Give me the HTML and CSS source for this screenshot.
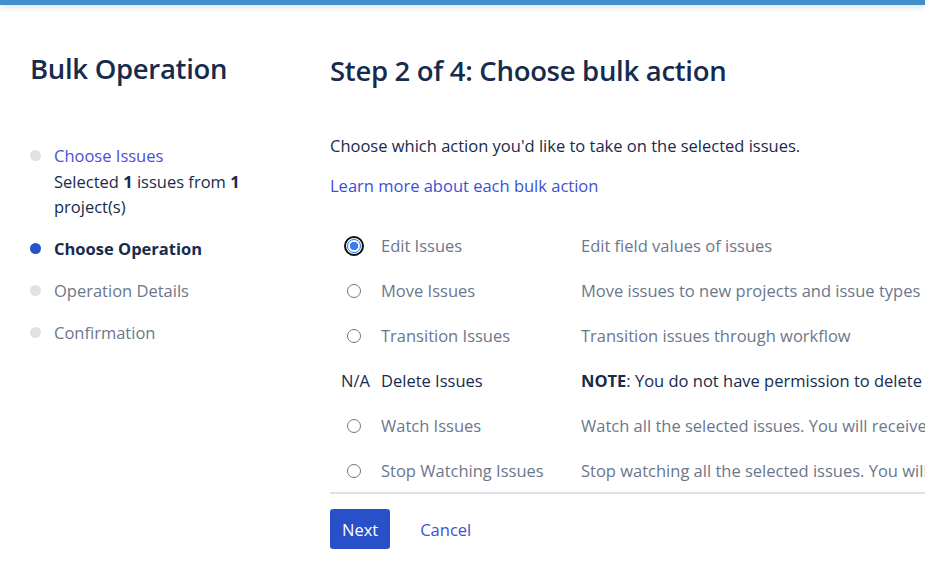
FILE: index.html
```html
<!DOCTYPE html>
<html lang="en">
<head>
  <meta charset="UTF-8" />
  <meta name="viewport" content="width=device-width, initial-scale=1.0"/>
  <title>Bulk Operation</title>
  <link rel="stylesheet" href="styles.css">
</head>
<body>
  <div class="topbar"></div>

  <div class="page">
    <div class="sidebar">
      <h1>Bulk Operation</h1>
      <ul class="steps">
        <li class="done">
          <a href="#">Choose Issues</a>
          <div class="note">Selected <strong>1</strong> issues from <strong>1</strong> project(s)</div>
        </li>
        <li class="current">Choose Operation</li>
        <li>Operation Details</li>
        <li>Confirmation</li>
      </ul>
    </div>

    <div class="main">
      <h2>Step 2 of 4: Choose bulk action</h2>
      <p class="intro">Choose which action you'd like to take on the selected issues.</p>
      <p class="more"><a href="#">Learn more about each bulk action</a></p>

      <table class="ops">
        <tr>
          <td class="pick"><input type="radio" name="op" class="focus" checked></td>
          <td class="name">Edit Issues</td>
          <td class="desc">Edit field values of issues</td>
        </tr>
        <tr>
          <td class="pick"><input type="radio" name="op"></td>
          <td class="name">Move Issues</td>
          <td class="desc">Move issues to new projects and issue types</td>
        </tr>
        <tr>
          <td class="pick"><input type="radio" name="op"></td>
          <td class="name">Transition Issues</td>
          <td class="desc">Transition issues through workflow</td>
        </tr>
        <tr class="na">
          <td class="pick">N/A</td>
          <td class="name">Delete Issues</td>
          <td class="desc"><strong>NOTE</strong>: You do not have permission to delete the selected issues.</td>
        </tr>
        <tr>
          <td class="pick"><input type="radio" name="op"></td>
          <td class="name">Watch Issues</td>
          <td class="desc">Watch all the selected issues. You will receive notifications when any of these issues are updated.</td>
        </tr>
        <tr>
          <td class="pick"><input type="radio" name="op"></td>
          <td class="name">Stop Watching Issues</td>
          <td class="desc">Stop watching all the selected issues. You will no longer receive notifications.</td>
        </tr>
      </table>

      <div class="actions">
        <button class="next">Next</button>
        <a href="#" class="cancel">Cancel</a>
      </div>
    </div>
  </div>
</body>
</html>
```

FILE: styles.css
```css
html, body {
  overflow: hidden;
}
body {
  font-family: 'Segoe UI', 'Open Sans', sans-serif;
  font-size: 16.5px;
  color: #172b4d;
  background: white;
  margin: 0;
}
a {
  text-decoration: none;
}
.topbar {
  height: 5px;
  background: #4190ce;
  box-shadow: 0 2px 6px rgba(9, 30, 66, 0.15);
}
.page {
  display: flex;
  padding: 0 30px;
}
.sidebar {
  width: 300px;
  flex-shrink: 0;
}
h1, h2 {
  font-size: 27.5px;
  font-weight: 600;
  letter-spacing: -0.3px;
  margin: 0;
  color: #172b4d;
}
h1 {
  margin-top: 45px;
}
h2 {
  margin-top: 47px;
}
.steps {
  list-style: none;
  margin: 56px 0 0;
  padding: 0;
}
.steps li {
  position: relative;
  padding-left: 24px;
  line-height: 25.5px;
  margin-bottom: 16.5px;
  color: #6b778c;
}
.steps li::before {
  content: "";
  position: absolute;
  left: 0;
  top: 7px;
  width: 11px;
  height: 11px;
  border-radius: 50%;
  background: #dfe1e6;
}
.steps li.current {
  font-weight: bold;
  color: #172b4d;
}
.steps li.current::before {
  background: #2850c8;
}
.steps li.done a {
  color: #4b4fd4;
}
.steps .note {
  color: #172b4d;
  width: 200px;
}
.main {
  flex: 1;
  min-width: 0;
  white-space: nowrap;
}
.intro {
  margin: 45px 0 0;
}
.more {
  margin: 17px 0 0;
}
.more a {
  color: #3a51d5;
}
.ops {
  border-collapse: collapse;
  margin-top: 26px;
  width: 1200px;
}
.ops tr {
  height: 45px;
}
.ops td {
  padding: 0;
  color: #6b778c;
}
.ops .pick {
  width: 51px;
  text-align: center;
  color: #172b4d;
}
.ops .name {
  width: 200px;
}
.ops .na .name,
.ops .na .desc {
  color: #172b4d;
}
.ops tr:last-child td {
  border-bottom: 2px solid #dfe1e6;
}
.ops input {
  appearance: none;
  width: 14px;
  height: 14px;
  margin: 0 0 0 -4px;
  border: 1px solid #767676;
  border-radius: 50%;
  background: white;
  vertical-align: -1px;
}
.ops input:checked {
  border-color: #1a73e8;
  background: radial-gradient(circle, #3b7cf2 0 4px, white 4.5px);
}
.ops input.focus {
  outline: 2px solid #101010;
  outline-offset: 1px;
}
.actions {
  display: flex;
  align-items: center;
  margin-top: 15px;
}
.next {
  background: #2850c8;
  color: white;
  border: none;
  border-radius: 3px;
  font-family: inherit;
  font-size: 16.5px;
  height: 40px;
  padding: 0 12px;
  cursor: pointer;
}
.cancel {
  margin-left: 30px;
  color: #3a51d5;
}
```
